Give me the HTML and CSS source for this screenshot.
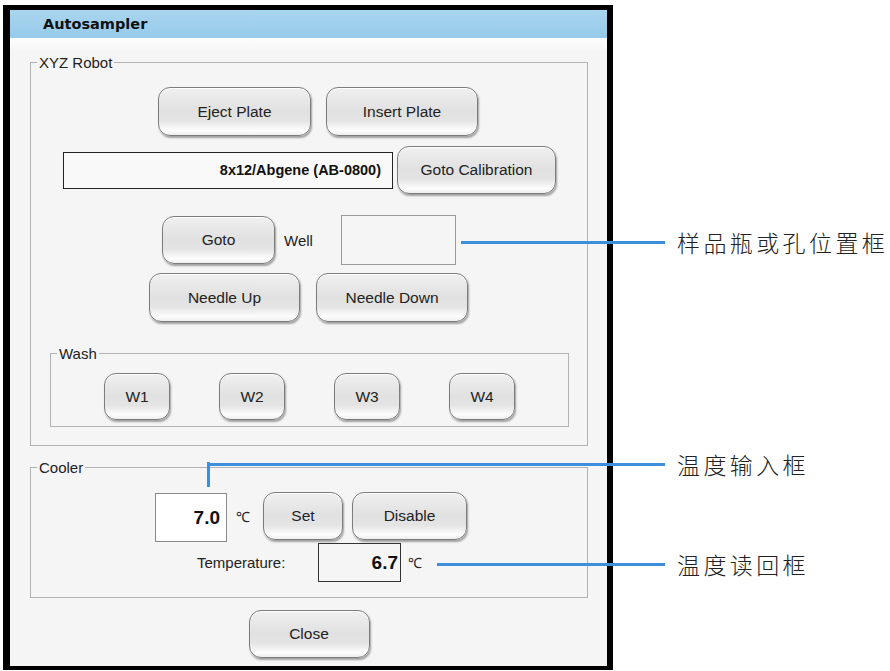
FILE: index.html
```html
<!DOCTYPE html>
<html lang="en">
<head>
  <meta charset="UTF-8">
  <title>Autosampler</title>
  <link rel="stylesheet" href="styles.css">
</head>
<body>

<div class="window">
  <div class="titlebar">Autosampler</div>

  <div class="content">
    <!-- XYZ Robot -->
    <div class="group xyz">
      <div class="legend">XYZ Robot</div>

      <div class="row row-plate">
        <button class="btn w153">Eject Plate</button>
        <button class="btn w152">Insert Plate</button>
      </div>

      <div class="row row-calib">
        <div class="plate-box">8x12/Abgene (AB-0800)</div>
        <button class="btn w159">Goto Calibration</button>
      </div>

      <div class="row row-goto">
        <button class="btn w113">Goto</button>
        <span class="well-label">Well</span>
        <div class="well-box"></div>
      </div>

      <div class="row row-needle">
        <button class="btn w151">Needle Up</button>
        <button class="btn w152">Needle Down</button>
      </div>

      <!-- Wash -->
      <div class="group wash">
        <div class="legend">Wash</div>
        <div class="row row-wash">
          <button class="btn wbtn">W1</button>
          <button class="btn wbtn">W2</button>
          <button class="btn wbtn">W3</button>
          <button class="btn wbtn">W4</button>
        </div>
      </div>
    </div>

    <!-- Cooler -->
    <div class="group cooler">
      <div class="legend">Cooler</div>

      <div class="row row-set">
        <div class="temp-input">7.0</div>
        <span class="unit">&#8451;</span>
        <button class="btn w80">Set</button>
        <button class="btn w115">Disable</button>
      </div>

      <div class="row row-read">
        <span class="temp-label">Temperature:</span>
        <div class="temp-read">6.7</div>
        <span class="unit-read">&#8451;</span>
      </div>
    </div>

    <div class="row row-close">
      <button class="btn w121">Close</button>
    </div>
  </div>
</div>

<!-- callouts -->
<div class="note note-well">
  <div class="lead" style="width: 204px"></div>
  <span class="note-text">样品瓶或孔位置框</span>
</div>

<div class="note note-input">
  <div class="drop"></div>
  <div class="lead" style="width: 458px"></div>
  <span class="note-text">温度输入框</span>
</div>

<div class="note note-read">
  <div class="lead" style="width: 228px"></div>
  <span class="note-text">温度读回框</span>
</div>

</body>
</html>
```

FILE: styles.css
```css
/* Page */
body {
  margin: 0;
  background: #fff;
  position: relative;
  font-family: "Liberation Sans", Arial, sans-serif;
  color: #222;
}

/* Window frame */
.window {
  margin: 5px 0 0 3px;
  width: 610px;
  height: 665px;
  box-sizing: border-box;
  border: solid #000;
  border-width: 5px 6px 4px 7px;
  display: flex;
  flex-direction: column;
}

.titlebar {
  height: 28px;
  line-height: 28px;
  padding-left: 33px;
  background: linear-gradient(#a9d5ef, #96cae9);
  font-family: "DejaVu Sans", sans-serif;
  font-weight: bold;
  font-size: 14.5px;
  color: #111;
}

.content {
  flex: 1;
  padding: 24px 19px 0 20px;
  background: linear-gradient(#fdfdfd, #f5f5f5 14px);
}

/* Group boxes */
.group {
  border: 1px solid #b3b3b3;
  box-sizing: border-box;
}

.legend {
  width: fit-content;
  margin: -9px 0 0 6px;
  padding: 0 2px;
  line-height: 17px;
  font-size: 15px;
  color: #222;
  background: #f5f5f5;
}

.xyz {
  height: 384px;
}

.wash {
  margin: 31px 0 0 19px;
  width: 519px;
  height: 74px;
}

.cooler {
  margin-top: 21px;
  height: 131px;
}

/* Rows */
.row {
  display: flex;
  align-items: center;
}

.row-plate {
  margin-top: 16px;
  padding-left: 127px;
  gap: 15px;
}

.row-calib {
  margin-top: 10px;
  padding-left: 32px;
  gap: 4px;
}

.row-goto {
  margin-top: 21px;
  padding-left: 131px;
}

.row-needle {
  margin-top: 8px;
  padding-left: 118px;
  gap: 16px;
}

.row-wash {
  margin-top: 11px;
  padding-left: 53px;
  gap: 49px;
}

.row-set {
  margin-top: 16px;
  padding-left: 124px;
  align-items: flex-start;
}

.row-read {
  margin-top: 1px;
  padding-left: 166px;
}

.row-close {
  margin-top: 12px;
  justify-content: center;
}

/* Buttons */
.btn {
  height: 48px;
  box-sizing: border-box;
  padding: 0;
  border: 1px solid #7c7c7c;
  border-radius: 12px;
  background: linear-gradient(#f0f0f0 0%, #e1e1e1 48%, #e4e4e4 70%, #fdfdfd 90%, #eeeeee 100%);
  box-shadow: 1px 2px 2px rgba(0, 0, 0, 0.35), inset 0 1px 0 #fff;
  font-family: "Liberation Sans", Arial, sans-serif;
  font-size: 15.5px;
  color: #222;
}

.w80 { width: 80px; }
.w113 { width: 113px; }
.w115 { width: 115px; }
.w121 { width: 121px; }
.w151 { width: 151px; height: 49px; }
.w152 { width: 152px; height: 49px; }
.w153 { width: 153px; height: 49px; }
.w159 { width: 159px; }

.wbtn {
  width: 66px;
  height: 47px;
}

/* Boxes */
.plate-box {
  width: 330px;
  height: 37px;
  box-sizing: border-box;
  border: 1px solid #222;
  background: #f9f9f9;
  padding-right: 11px;
  text-align: right;
  line-height: 35px;
  font-weight: bold;
  font-size: 14.5px;
  color: #111;
}

.well-label {
  width: 66px;
  padding-left: 9px;
  box-sizing: border-box;
  font-size: 15px;
}

.well-box {
  width: 115px;
  height: 50px;
  box-sizing: border-box;
  border: 1px solid #9a9a9a;
  background: #f5f5f5;
}

.temp-input {
  margin-top: 1px;
  width: 72px;
  height: 49px;
  box-sizing: border-box;
  border: 1px solid #8a8a8a;
  background: #fff;
  padding-right: 6px;
  text-align: right;
  line-height: 47px;
  font-weight: bold;
  font-size: 19px;
  color: #111;
}

.unit {
  width: 36px;
  padding-left: 9px;
  box-sizing: border-box;
  line-height: 50px;
  font-size: 14px;
}

.row-set .w80 {
  margin-right: 9px;
}

.temp-label {
  width: 121px;
  font-size: 15px;
}

.temp-read {
  width: 83px;
  height: 39px;
  box-sizing: border-box;
  border: 1px solid #333;
  background: #f5f5f5;
  padding-right: 2px;
  text-align: right;
  line-height: 37px;
  font-weight: bold;
  font-size: 19px;
  color: #111;
}

.unit-read {
  margin-left: 7px;
  font-size: 14px;
}

/* Callouts */
.note {
  position: absolute;
  display: flex;
  align-items: center;
  gap: 12px;
}

.note-well { left: 461px; top: 227px; }
.note-input { left: 207px; top: 449px; }
.note-read { left: 437px; top: 549px; }

.lead {
  height: 3px;
  background: #3d8fdb;
}

.drop {
  position: absolute;
  left: 0;
  top: 13px;
  width: 3px;
  height: 25px;
  background: #3d8fdb;
}

.note-text {
  font-family: "Noto Sans CJK SC", sans-serif;
  font-weight: 300;
  font-size: 23px;
  letter-spacing: 3.4px;
  line-height: 30px;
  color: #222;
}
```
